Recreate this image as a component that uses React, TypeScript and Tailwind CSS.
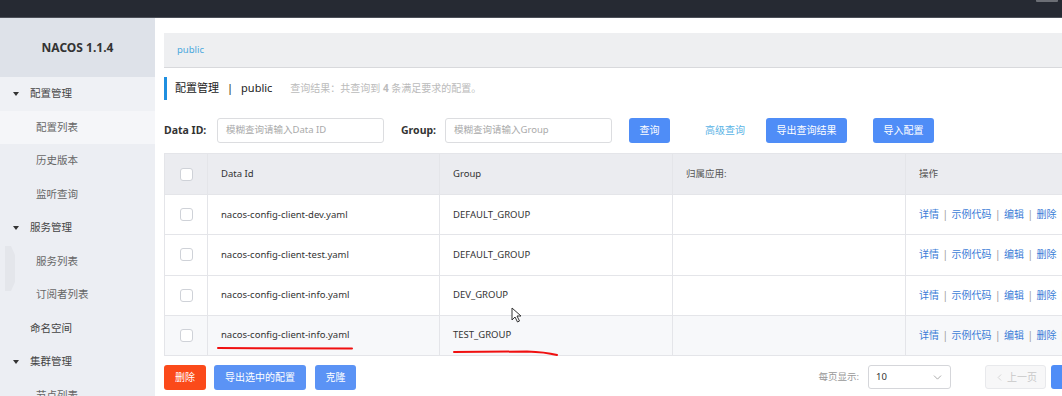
import { ChevronDown, ChevronLeft } from "lucide-react";

const font = "font-['Noto_Sans','Noto_Sans_CJK_SC',sans-serif]";

type MenuItem = { label: string; level: 0 | 1 | 2; bg?: string };

const menu: MenuItem[] = [
    { label: "配置管理", level: 0, bg: "bg-[#eff1f5]" },
    { label: "配置列表", level: 1, bg: "bg-[#f5f6f9]" },
    { label: "历史版本", level: 1 },
    { label: "监听查询", level: 1 },
    { label: "服务管理", level: 0 },
    { label: "服务列表", level: 1 },
    { label: "订阅者列表", level: 1 },
    { label: "命名空间", level: 2 },
    { label: "集群管理", level: 0 },
    { label: "节点列表", level: 1 },
];

const rows = [
    { id: "nacos-config-client-dev.yaml", group: "DEFAULT_GROUP" },
    { id: "nacos-config-client-test.yaml", group: "DEFAULT_GROUP" },
    { id: "nacos-config-client-info.yaml", group: "DEV_GROUP" },
    { id: "nacos-config-client-info.yaml", group: "TEST_GROUP" },
];

function Checkbox() {
    return <span className="block h-[13px] w-[13px] rounded-[3px] border border-[#cfd2d8] bg-white" />;
}

function Sidebar() {
    return (
        <aside className="relative w-[155px] shrink-0 bg-[#eceef3]">
            <div className="flex h-[59px] items-center justify-center bg-[#dee2e9] text-[12px] font-bold text-[#333]">
                NACOS 1.1.4
            </div>
            {menu.map((m) => (
                <div
                    key={m.label}
                    className={`relative flex h-[33.5px] items-center pt-[1px] text-[10.5px] ${m.bg ?? ""} ${
                        m.level === 1 ? "pl-[36px] text-[#666]" : "pl-[30px] text-[#444]"
                    }`}
                >
                    {m.level === 0 && (
                        <span className="absolute left-[13px] top-[15px] h-0 w-0 border-x-[3.5px] border-t-[4.5px] border-x-transparent border-t-[#333]" />
                    )}
                    {m.label}
                </div>
            ))}
            {/* collapse tab */}
            <span className="absolute left-[5px] top-[228px] h-[45px] w-[10px] bg-[#e4e6eb] [clip-path:polygon(0_0,60%_0,100%_20%,100%_80%,60%_100%,0_100%)]" />
        </aside>
    );
}

function Btn({ children, className }: { children: React.ReactNode; className: string }) {
    return (
        <button className={`flex h-[25px] items-center justify-center rounded-[3px] text-[10px] text-white ${className}`}>
            {children}
        </button>
    );
}

function Table() {
    const cell = "border-l border-[#e4e5e9] px-[13px]";
    return (
        <div className="relative border-y border-l border-[#e4e5e9]">
            <div className="grid h-[40px] grid-cols-[42px_232px_233px_233px_1fr] items-center bg-[#ebecf0] text-[9.5px] text-[#333]">
                <div className="flex justify-center">
                    <Checkbox />
                </div>
                <div className={`${cell} flex h-full items-center`}>Data Id</div>
                <div className={`${cell} flex h-full items-center`}>Group</div>
                <div className={`${cell} flex h-full items-center text-[#555]`}>归属应用:</div>
                <div className={`${cell} flex h-full items-center text-[#555]`}>操作</div>
            </div>
            {rows.map((r, i) => (
                <div
                    key={i}
                    className={`grid h-[40.25px] grid-cols-[42px_232px_233px_233px_1fr] border-t border-[#e4e5e9] text-[9.5px] text-[#333] ${
                        i === 3 ? "bg-[#f7f8fa]" : "bg-white"
                    }`}
                >
                    <div className="flex items-center justify-center">
                        <Checkbox />
                    </div>
                    <div className={`${cell} flex items-center`}>{r.id}</div>
                    <div className={`${cell} flex items-center`}>{r.group}</div>
                    <div className={cell} />
                    <div className={`${cell} flex items-center gap-[3.5px] whitespace-nowrap text-[10px] text-[#3a7cd7]`}>
                        <span>详情</span>
                        <span className="text-[#999]">|</span>
                        <span>示例代码</span>
                        <span className="text-[#999]">|</span>
                        <span>编辑</span>
                        <span className="text-[#999]">|</span>
                        <span>删除</span>
                        <span className="text-[#999]">|</span>
                    </div>
                </div>
            ))}
            {/* hand-drawn red underlines */}
            <svg className="pointer-events-none absolute left-0 top-0" width="900" height="205">
                <path d="M53 194 L187 194.5" stroke="#f01010" strokeWidth="2" fill="none" strokeLinecap="round" />
                <path d="M289 198 L362 197.5 Q380 198 392 201" stroke="#f01010" strokeWidth="2" fill="none" strokeLinecap="round" />
            </svg>
            {/* mouse cursor */}
            <svg className="pointer-events-none absolute left-[346px] top-[153px]" width="12" height="16" viewBox="0 0 12 16">
                <path d="M1 1 L1 13 L4 10 L6.5 15 L8.5 14 L6 9 L10 9 Z" fill="white" stroke="#333" strokeWidth="1" strokeLinejoin="round" />
            </svg>
        </div>
    );
}

export default function App() {
    return (
        <div className={`flex h-[396px] w-[1062px] flex-col overflow-hidden bg-white ${font}`}>
            <header className="relative h-[18px] shrink-0 border-b border-[#4c5059] bg-[#262a33]">
                <span className="absolute right-[4px] top-0 h-[2px] w-[22px] rounded-b-[1px] bg-[#6b6e75]" />
            </header>
            <div className="flex flex-1 overflow-hidden">
                <Sidebar />
                <main className="min-w-0 flex-1 pl-[9px] pt-[15px]">
                    <div className="flex h-[35px] items-center border-b border-[#d8d9dc] bg-[#eeeff1] pl-[13px] text-[9.5px] text-[#4aa8dd]">
                        public
                    </div>

                    <div className="mt-[9px] flex h-[23px] items-center border-l-[3px] border-[#1f8fe0] pl-[8px]">
                        <span className="text-[11px] text-[#222]">配置管理</span>
                        <span className="mx-[8px] text-[11px] text-[#222]">|</span>
                        <span className="text-[11px] text-[#222]">public</span>
                        <span className="ml-[18px] text-[10px] text-[#bbbbbb]">
                            查询结果：共查询到 <b className="font-bold">4</b> 条满足要求的配置。
                        </span>
                    </div>

                    <div className="mt-[18px] flex h-[25px] items-center">
                        <span className="w-[53px] text-[10.5px] font-bold text-[#333]">Data ID:</span>
                        <div className="flex h-[25px] w-[167px] items-center rounded-[3px] border border-[#dcdde0] pl-[8px] text-[9.5px] text-[#aaa]">
                            模糊查询请输入Data ID
                        </div>
                        <span className="ml-[17px] w-[44px] text-[10.5px] font-bold text-[#333]">Group:</span>
                        <div className="flex h-[25px] w-[167px] items-center rounded-[3px] border border-[#dcdde0] pl-[8px] text-[9.5px] text-[#aaa]">
                            模糊查询请输入Group
                        </div>
                        <Btn className="ml-[17px] w-[41px] bg-[#4f8df7]">查询</Btn>
                        <span className="ml-[35px] text-[10px] text-[#5ab4e6]">高级查询</span>
                        <Btn className="ml-[21px] w-[81px] bg-[#4f8df7]">导出查询结果</Btn>
                        <Btn className="ml-[26px] w-[61px] bg-[#4f8df7]">导入配置</Btn>
                    </div>

                    <div className="mt-[10px]">
                        <Table />
                    </div>

                    <div className="mt-[9px] flex h-[24px] items-center">
                        <Btn className="h-[24px] w-[42px] bg-[#fb4a1a]">删除</Btn>
                        <Btn className="ml-[8px] h-[24px] w-[92px] bg-[#5b93f5]">导出选中的配置</Btn>
                        <Btn className="ml-[9px] h-[24px] w-[41px] bg-[#5b93f5]">克隆</Btn>
                        <span className="ml-auto text-[9.5px] text-[#999]">每页显示:</span>
                        <div className="ml-[9px] flex h-[24px] w-[83px] items-center justify-between rounded-[3px] border border-[#d5d6da] pl-[7px] pr-[6px] text-[9.5px] text-[#333]">
                            10
                            <ChevronDown className="h-[13px] w-[13px] text-[#999]" strokeWidth={1.5} />
                        </div>
                        <div className="ml-[34px] flex h-[24px] w-[61px] items-center justify-center gap-[2px] rounded-[3px] border border-[#e8e9ec] bg-[#f7f7f8] text-[10px] text-[#c8c8c8]">
                            <ChevronLeft className="h-[11px] w-[11px]" strokeWidth={1.5} />
                            上一页
                        </div>
                        <div className="ml-[5px] h-[24px] w-[11px] shrink-0 rounded-l-[3px] bg-[#4f8df7]" />
                    </div>
                </main>
            </div>
        </div>
    );
}
